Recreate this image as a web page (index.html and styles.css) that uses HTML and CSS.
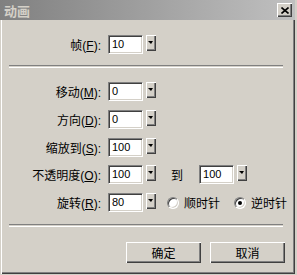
FILE: index.html
```html
<!DOCTYPE html>
<html lang="zh">
<head>
  <meta charset="UTF-8" />
  <title>动画</title>
  <link rel="stylesheet" href="styles.css">
</head>
<body>
  <div class="window">
    <div class="titlebar">
      <span class="title">动画</span>
      <span class="close">
        <svg width="8" height="7" viewBox="0 0 8 7"><path d="M0.5 0.5 L7.5 6.5 M7.5 0.5 L0.5 6.5" stroke="#000" stroke-width="1.6" fill="none"/></svg>
      </span>
    </div>

    <div class="row first">
      <label class="lbl">帧(<u>F</u>):</label>
      <span class="field">10</span>
      <span class="drop"></span>
    </div>

    <div class="sep"></div>

    <div class="rows">
      <div class="row">
        <label class="lbl">移动(<u>M</u>):</label>
        <span class="field">0</span>
        <span class="drop"></span>
      </div>
      <div class="row">
        <label class="lbl">方向(<u>D</u>):</label>
        <span class="field">0</span>
        <span class="drop"></span>
      </div>
      <div class="row">
        <label class="lbl">缩放到(<u>S</u>):</label>
        <span class="field">100</span>
        <span class="drop"></span>
      </div>
      <div class="row">
        <label class="lbl">不透明度(<u>O</u>):</label>
        <span class="field">100</span>
        <span class="drop"></span>
        <span class="to">到</span>
        <span class="field">100</span>
        <span class="drop"></span>
      </div>
      <div class="row">
        <label class="lbl">旋转(<u>R</u>):</label>
        <span class="field">80</span>
        <span class="drop"></span>
        <span class="radio cw"></span>
        <span class="rlabel">顺时针</span>
        <span class="radio ccw checked"></span>
        <span class="rlabel">逆时针</span>
      </div>
    </div>

    <div class="sep"></div>

    <div class="buttons">
      <button class="btn">确定</button>
      <button class="btn">取消</button>
    </div>
  </div>
</body>
</html>
```

FILE: styles.css
```css
body {
  margin: 0;
  background: #d4d0c8;
  font-family: "Liberation Sans", "Noto Sans CJK SC", sans-serif;
  font-size: 12px;
  color: #000;
}

.window {
  width: 295px;
  height: 274px;
  box-sizing: border-box;
  background: #d4d0c8;
  box-shadow: inset 1px 0 #d4d0c8, inset 2px 0 #fff, inset -1px -1px #404040, inset -2px -2px #808080;
}

.titlebar {
  height: 20px;
  display: flex;
  align-items: center;
  justify-content: space-between;
  background: linear-gradient(to right, #808080, #c0c0c0);
  padding: 0 4px 0 4px;
}

.title {
  font-family: "Noto Sans CJK SC", sans-serif;
  font-weight: bold;
  font-size: 13px;
  color: #d4d0c8;
  letter-spacing: 0;
}

.close {
  width: 15px;
  height: 14px;
  box-sizing: border-box;
  display: flex;
  align-items: center;
  justify-content: center;
  background: #d4d0c8;
  box-shadow: inset 1px 1px #fff, inset -1px -1px #404040, inset -2px -2px #808080;
  margin-right: -1px;
}

.row {
  display: flex;
  align-items: center;
  height: 19px;
}

.row.first {
  margin-top: 15px;
}

.lbl {
  width: 101px;
  text-align: right;
  margin-right: 7px;
  white-space: nowrap;
}

.lbl u {
  text-underline-offset: 1px;
}

.field {
  width: 35px;
  height: 19px;
  box-sizing: border-box;
  background: #fff;
  border: 1px solid;
  border-color: #808080 #fff #fff #808080;
  box-shadow: inset 1px 1px #404040, inset -1px -1px #d4d0c8;
  padding-left: 3px;
  font-size: 11px;
  line-height: 17px;
}

.drop {
  align-self: flex-start;
  width: 10px;
  height: 16px;
  margin-left: 3px;
  box-sizing: border-box;
  background: #d4d0c8;
  box-shadow: inset 1px 1px #fff, inset -1px -1px #404040, inset -2px -2px #808080;
  position: relative;
}

.drop::after {
  content: "";
  position: absolute;
  left: 2px;
  top: 6px;
  border-left: 3px solid transparent;
  border-right: 2px solid transparent;
  border-top: 3px solid #000;
}

.sep {
  margin: 11px 12px 0 9px;
  height: 1px;
  border-top: 1px solid #808080;
  border-bottom: 1px solid #fff;
}

.rows {
  display: grid;
  grid-auto-rows: 19px;
  row-gap: 8.75px;
  margin-top: 14px;
  margin-bottom: 12px;
}

.rows + .sep {
  margin-top: 0;
}

.to {
  margin-left: 15px;
  margin-right: 16px;
  font-family: "Noto Sans CJK SC", sans-serif;
}

.radio {
  width: 12px;
  height: 12px;
  box-sizing: border-box;
  border-radius: 50%;
  background: #fff;
  border: 1px solid;
  border-color: #808080 #fff #fff #808080;
  box-shadow: inset 1px 1px #404040, inset -1px -1px #d4d0c8;
  position: relative;
}

.radio.cw {
  margin-left: 11px;
}

.radio.ccw {
  margin-left: 14px;
}

.radio.checked::after {
  content: "";
  position: absolute;
  left: 3px;
  top: 3px;
  width: 4px;
  height: 4px;
  border-radius: 50%;
  background: #000;
}

.rlabel {
  margin-left: 5px;
  font-family: "Noto Sans CJK SC", sans-serif;
}

.buttons {
  display: flex;
  justify-content: flex-end;
  gap: 9px;
  margin-top: 15px;
  padding-right: 10px;
}

.btn {
  width: 75px;
  height: 21px;
  padding: 0;
  border: none;
  background: #d4d0c8;
  font-family: "Noto Sans CJK SC", sans-serif;
  font-size: 12px;
  color: #000;
  box-shadow: inset 1px 1px #fff, inset -1px -1px #404040, inset -2px -2px #808080;
}
```
